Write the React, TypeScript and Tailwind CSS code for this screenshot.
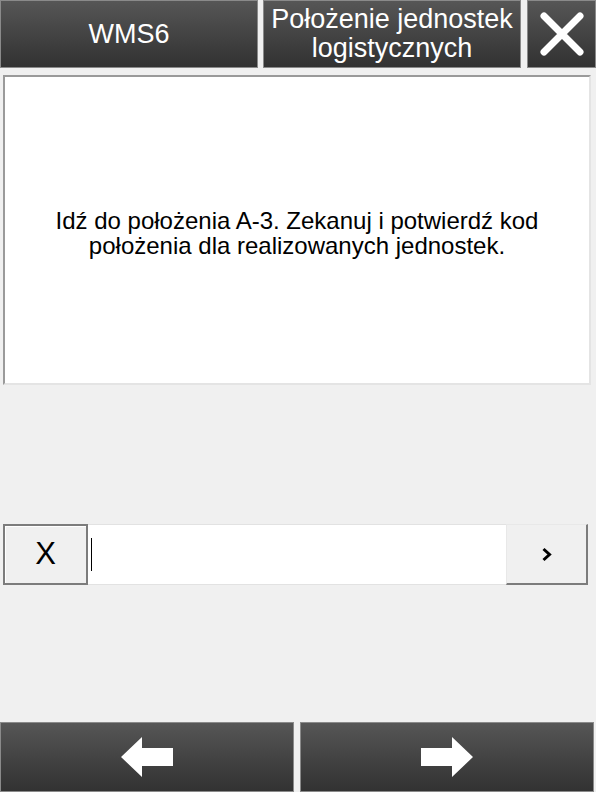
import React from 'react';

const darkBtn =
  'flex items-center justify-center border border-[#8a8a8a] bg-gradient-to-b from-[#565656] to-[#323232] text-white';

function CloseIcon() {
  return (
    <svg width="46" height="46" viewBox="0 0 46 46">
      <path d="M5 5 L41 41 M41 5 L5 41" stroke="#fff" strokeWidth="7" strokeLinecap="round" />
    </svg>
  );
}

function ArrowLeft() {
  return (
    <svg width="54" height="42" viewBox="0 0 54 42">
      <path d="M1 21 L22 1 L22 12 L53 12 L53 30 L22 30 L22 41 Z" fill="#fff" />
    </svg>
  );
}

function ArrowRight() {
  return (
    <svg width="54" height="42" viewBox="0 0 54 42">
      <path d="M53 21 L32 1 L32 12 L1 12 L1 30 L32 30 L32 41 Z" fill="#fff" />
    </svg>
  );
}

export default function App() {
  return (
    <div
      className="w-[596px] h-[792px] bg-[#f0f0f0] flex flex-col overflow-hidden"
      style={{ fontFamily: '"Liberation Sans", Arial, sans-serif' }}
    >
      {/* header */}
      <div className="flex h-[68px] gap-[5px] shrink-0">
        <div className={`${darkBtn} w-[258px] text-[27px]`}>WMS6</div>
        <div className={`${darkBtn} w-[258px] text-[27px] leading-[29px] text-center`}>
          Położenie jednostek
          <br />
          logistycznych
        </div>
        <div className={`${darkBtn} flex-1 ml-px`}>
          <CloseIcon />
        </div>
      </div>

      {/* message */}
      <div className="mt-[7px] ml-[3px] mr-[5px] h-[310px] shrink-0 bg-white border-2 border-t-[#9a9a9a] border-l-[#9a9a9a] border-r-[#e4e4e4] border-b-[#e4e4e4] flex items-center justify-center px-2">
        <p className="text-[24px] leading-[25px] text-black text-center pt-[5px]">
          Idź do położenia A-3. Zekanuj i potwierdź kod
          <br />
          położenia dla realizowanych jednostek.
        </p>
      </div>

      {/* scan input */}
      <div className="mt-[139px] ml-[3px] mr-[8px] h-[61px] flex shrink-0">
        <div className="w-[85px] border-2 border-[#7c7c7c] bg-[#f0f0f0] shadow-[inset_1px_1px_0_#fff] flex items-center justify-center text-[31px] text-black">
          X
        </div>
        <div className="flex-1 bg-white border-y border-[#e2e2e2] flex items-center pl-[3px]">
          <div className="w-px h-[33px] bg-black" />
        </div>
        <div className="w-[82px] bg-[#f0f0f0] border-t border-l border-[#e8e8e8] border-r-2 border-b-2 border-r-[#7c7c7c] border-b-[#7c7c7c] flex items-center justify-center">
          <svg width="12" height="15" viewBox="0 0 12 15">
            <path d="M2.5 2 L8.5 7.5 L2.5 13" stroke="#000" strokeWidth="3" fill="none" />
          </svg>
        </div>
      </div>

      {/* footer nav */}
      <div className="mt-auto h-[70px] flex gap-[6px] shrink-0">
        <div className={`${darkBtn} w-[294px]`}>
          <ArrowLeft />
        </div>
        <div className={`${darkBtn} w-[294px]`}>
          <ArrowRight />
        </div>
      </div>
    </div>
  );
}
